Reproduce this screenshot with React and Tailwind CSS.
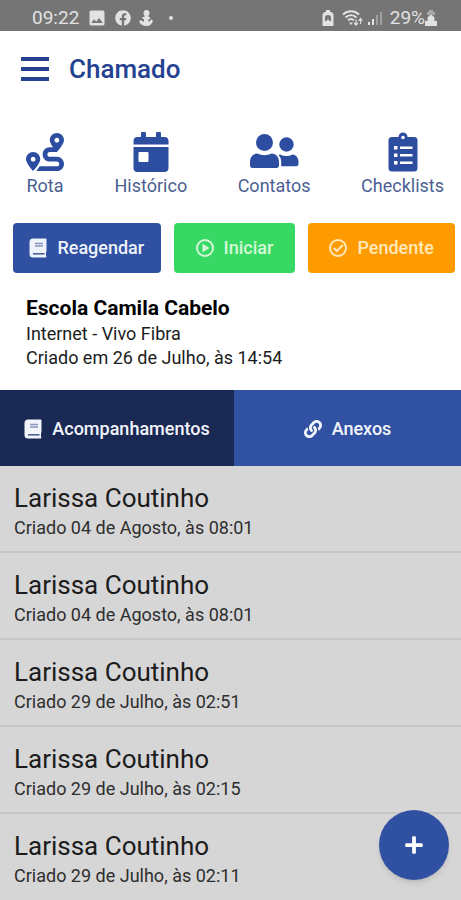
import { useState } from "react";
import { FaCalendarDay, FaFacebook, FaLink, FaPlus, FaRoute } from "react-icons/fa";
import { MdImage } from "react-icons/md";

const ContactsIcon = ({ className }) => (
    <svg viewBox="0 0 50 40" className={className} fill="currentColor">
        <circle cx="15.500" cy="10.500" r="8.500" />
        <path d="M8.500 21.500c4.500 2.200 9.500 2.200 14 0 4.500 0 7.500 3.500 7.500 8.500v3.500c0 1.500-1 2.500-2.500 2.500h-24C2 36 1 35 1 33.500V30c0-5 3-8.500 7.500-8.500z" />
        <circle cx="37.500" cy="12.500" r="7.200" />
        <path d="M31 22.500c4 2 8.500 2 12.500 0 3.700.3 6 3.500 6 7.500v2c0 1.300-.9 2.200-2.200 2.200H32.200V30c0-3-.9-5.300-2.700-7z" />
    </svg>
);

const ChecklistIcon = ({ className }) => (
    <svg viewBox="0 0 30 40" className={className}>
        <rect x="0.5" y="5" width="29" height="34.500" rx="3.500" fill="currentColor" />
        <path d="M8 11V7.500C8 6 9 5 10.500 5a4.500 4.500 0 0 1 9 0C21 5 22 6 22 7.500V11z" fill="currentColor" />
        <circle cx="15" cy="5.500" r="1.800" fill="#fff" />
        <g fill="#fff">
            <path d="M6 14h3.500v3.500H6zM6 21.500h3.500V25H6zM6 29h3.500v3.500H6z" />
            <path d="M12 14.500h12.500V17H12zM12 22h12.500v2.500H12zM12 29.500h12.500V32H12z" />
        </g>
    </svg>
);

const BookIcon = () => (
    <svg viewBox="0 0 18 20" className="w-[18px] h-5" fill="none">
        <path
            d="M4 .5h12.500c.6 0 1 .4 1 1V13c0 .5-.2.8-.5 1v4c.3.2.5.5.5.8 0 .4-.4.700-.8.700H4A3.500 3.500 0 0 1 .5 16V4A3.500 3.500 0 0 1 4 .5z"
            fill="currentColor"
        />
        <path d="M6 5.500h8M6 8h8" stroke="#8797bd" strokeWidth="1.300" />
        <path d="M4 15.800h11.500" stroke="#4b6093" strokeWidth="1.600" />
    </svg>
);

const PlayIcon = () => (
    <svg viewBox="0 0 18 18" className="w-[18px] h-[18px]">
        <circle cx="9" cy="9" r="8" fill="none" stroke="currentColor" strokeWidth="2" />
        <path d="M6.500 4.800v8.400l7-4.200z" fill="currentColor" />
    </svg>
);

const CheckIcon = () => (
    <svg viewBox="0 0 18 18" className="w-[18px] h-[18px]" fill="none" stroke="currentColor" strokeWidth="2">
        <circle cx="9" cy="9" r="8" />
        <path d="M4.800 9l3 3 6-6" />
    </svg>
);

const AnchorIcon = () => (
    <svg viewBox="0 0 14 16" className="w-[14px] h-4" fill="currentColor">
        <circle cx="7.500" cy="3" r="3" />
        <path d="M5.500 5h4v2h1.500v2H9.500v2.500c1 0 2-.8 2.800-2.300L14 11c-1 3-3.500 5-6.500 5S1.500 14.500 0 11.500l2-1.500c.8 1 1.800 1.500 3 1.500V9H3.500V7h2z" />
    </svg>
);

const BatteryIcon = () => (
    <svg viewBox="0 0 12 16" className="w-3 h-4" fill="currentColor">
        <path
            fillRule="evenodd"
            d="M4 0h4v2h1.500L11.500 4v12H.5V4l2-2H4zM6 5a3 3 0 0 0-3 3v3h2V9.500h2V11h2V8a3 3 0 0 0-3-3z"
        />
    </svg>
);

const WifiIcon = () => (
    <svg viewBox="0 0 22 16" className="w-[22px] h-4" fill="none" stroke="currentColor">
        <path d="M1 4.500C5.500.3 12.500.3 17 4.500" strokeWidth="2" />
        <path d="M3.500 7.500c3.300-3 7.700-3 11 0" strokeWidth="2" />
        <path d="M6 10.300c1.900-1.600 4.100-1.600 6 0" strokeWidth="2" />
        <path d="M7 12.500h4L9 15z" fill="currentColor" stroke="none" />
        <path d="M14 15V9.500m-1.800 3.500L14 15l1.800-2M18.500 14V8.500M16.500 11l2-2.500 2 2.500" strokeWidth="1.200" />
    </svg>
);

const SignalIcon = () => (
    <svg viewBox="0 0 14 16" className="w-[14px] h-4" fill="currentColor">
        <path d="M0 12h2v3H0zM4 9h2v6H4z" />
        <path d="M8 5h2v10H8zM12 2h2v13h-2z" opacity="0.4" />
    </svg>
);

const ChargeIcon = () => (
    <svg viewBox="0 0 12 16" className="w-3 h-4" fill="currentColor">
        <path d="M4 0h4v2h2v3H8.500L6 3.500 3.500 5H2V2h2z" opacity="0.5" />
        <path d="M6 4l3.500 3.500V11H12v5H0v-5h2.500V7.500z" />
    </svg>
);

const shortcuts = [
    { label: "Rota", icon: FaRoute, size: "w-[38px]" },
    { label: "Histórico", icon: FaCalendarDay, size: "w-10" },
    { label: "Contatos", icon: ContactsIcon, size: "w-[50px]" },
    { label: "Checklists", icon: ChecklistIcon, size: "w-[30px]" },
];

const followUps = [
    { id: 1, name: "Larissa Coutinho", created: "Criado 04 de Agosto, às 08:01" },
    { id: 2, name: "Larissa Coutinho", created: "Criado 04 de Agosto, às 08:01" },
    { id: 3, name: "Larissa Coutinho", created: "Criado 29 de Julho, às 02:51" },
    { id: 4, name: "Larissa Coutinho", created: "Criado 29 de Julho, às 02:15" },
    { id: 5, name: "Larissa Coutinho", created: "Criado 29 de Julho, às 02:11" },
];

const StatusBar = () => (
    <div className="h-[31px] bg-[#757575] text-[#e2e2e2] pl-8 pr-6 pt-1 flex items-center justify-between">
        <div className="flex items-center gap-2">
            <span className="text-[19px] leading-6">09:22</span>
            <MdImage className="w-5 h-5" />
            <FaFacebook className="w-4 h-4" />
            <AnchorIcon />
            <span className="w-1 h-1 ml-2 rounded-full bg-[#e2e2e2]" />
        </div>
        <div className="flex items-center gap-1">
            <BatteryIcon />
            <span className="pl-1"><WifiIcon /></span>
            <SignalIcon />
            <div className="pl-1 flex items-center">
                <span className="text-[19px] leading-6">29%</span>
                <ChargeIcon />
            </div>
        </div>
    </div>
);

const App = () => {
    const [tab, setTab] = useState("acompanhamentos");

    const tabClass = (name) =>
        `flex items-center justify-center gap-[10px] pt-[2px] text-lg font-medium text-[#f2f5fb] ${
            tab === name ? "bg-[#1a2954]" : "bg-[#3152a2]"
        }`;

    return (
        <div className="relative min-h-screen bg-white font-['Roboto',sans-serif] text-[#1c1c1c]">
            <StatusBar />

            {/* Header */}
            <header className="h-[75px] px-[21px] flex items-center gap-5 text-[#24428f]">
                <button aria-label="Menu" className="flex flex-col gap-[6px]">
                    <span className="w-7 h-1 bg-[#24428f]" />
                    <span className="w-7 h-1 bg-[#24428f]" />
                    <span className="w-7 h-1 bg-[#24428f]" />
                </button>
                <h1 className="text-[26px] leading-8 font-medium">Chamado</h1>
            </header>

            {/* Shortcuts */}
            <nav className="pt-[26px] pl-[26px] pr-[17px] flex justify-between">
                {shortcuts.map(({ label, icon: Icon, size }) => (
                    <button key={label} className="flex flex-col items-center">
                        <Icon className={`h-10 text-[#2c4da0] ${size}`} />
                        <span className="text-lg leading-7 text-[#4c5f92]">{label}</span>
                    </button>
                ))}
            </nav>

            {/* Actions */}
            <div className="pt-[23px] pl-[13px] pr-[6px] flex gap-[13px] text-lg font-medium">
                <button className="h-[50px] flex-[148] rounded bg-[#3050a1] text-[#eef2fb] flex items-center justify-center gap-[10px]">
                    <BookIcon />
                    Reagendar
                </button>
                <button className="h-[50px] flex-[122] rounded bg-[#37d863] text-[#d5f8d8] flex items-center justify-center gap-[10px]">
                    <PlayIcon />
                    Iniciar
                </button>
                <button className="h-[50px] flex-[147] rounded bg-[#ff9a00] text-[#ffe9b8] flex items-center justify-center gap-[10px]">
                    <CheckIcon />
                    Pendente
                </button>
            </div>

            {/* Ticket info */}
            <section className="px-[26px] pt-[21px] pb-5">
                <h2 className="text-[21px] leading-7 font-bold text-black">Escola Camila Cabelo</h2>
                <p className="text-lg leading-6">Internet - Vivo Fibra</p>
                <p className="text-lg leading-6">Criado em 26 de Julho, às 14:54</p>
            </section>

            {/* Tabs */}
            <div role="tablist" className="h-[76px] grid grid-cols-[234fr_227fr]">
                <button
                    role="tab"
                    aria-selected={tab === "acompanhamentos"}
                    onClick={() => setTab("acompanhamentos")}
                    className={tabClass("acompanhamentos")}
                >
                    <BookIcon />
                    Acompanhamentos
                </button>
                <button
                    role="tab"
                    aria-selected={tab === "anexos"}
                    onClick={() => setTab("anexos")}
                    className={tabClass("anexos")}
                >
                    <FaLink className="w-[18px] h-5" />
                    Anexos
                </button>
            </div>

            {/* Follow-ups */}
            <ul className="bg-[#d6d6d6]">
                {followUps.map((item) => (
                    <li
                        key={item.id}
                        className="h-[87px] px-[14px] pt-4 border-b-2 border-[#c6c6c6] last:h-[86px] last:border-0"
                    >
                        <p className="text-[26px] leading-8">{item.name}</p>
                        <p className="text-lg leading-7 text-[#2e2e2e]">{item.created}</p>
                    </li>
                ))}
            </ul>

            <button
                aria-label="Adicionar"
                className="fixed right-3 bottom-5 w-[70px] h-[70px] rounded-full bg-[#3050a1] text-white shadow-md flex items-center justify-center"
            >
                <FaPlus className="w-5 h-5" />
            </button>
        </div>
    );
};

export default App;
